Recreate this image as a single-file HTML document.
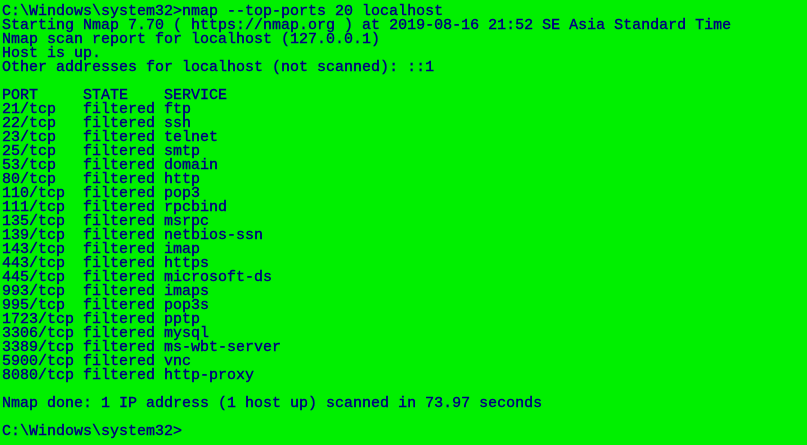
<!DOCTYPE html>
<html><head><meta charset="utf-8"><style>
html,body{margin:0;padding:0;background:#00f000;width:807px;height:445px;overflow:hidden}
pre{margin:0;position:absolute;left:2px;top:5px;font-family:"Liberation Mono",monospace;font-size:15px;line-height:14px;color:#000080;font-weight:normal;letter-spacing:0;-webkit-text-stroke:0.4px #000080}
</style></head><body><pre>C:\Windows\system32>nmap --top-ports 20 localhost
Starting Nmap 7.70 ( https://nmap.org ) at 2019-08-16 21:52 SE Asia Standard Time
Nmap scan report for localhost (127.0.0.1)
Host is up.
Other addresses for localhost (not scanned): ::1

PORT     STATE    SERVICE
21/tcp   filtered ftp
22/tcp   filtered ssh
23/tcp   filtered telnet
25/tcp   filtered smtp
53/tcp   filtered domain
80/tcp   filtered http
110/tcp  filtered pop3
111/tcp  filtered rpcbind
135/tcp  filtered msrpc
139/tcp  filtered netbios-ssn
143/tcp  filtered imap
443/tcp  filtered https
445/tcp  filtered microsoft-ds
993/tcp  filtered imaps
995/tcp  filtered pop3s
1723/tcp filtered pptp
3306/tcp filtered mysql
3389/tcp filtered ms-wbt-server
5900/tcp filtered vnc
8080/tcp filtered http-proxy

Nmap done: 1 IP address (1 host up) scanned in 73.97 seconds

C:\Windows\system32></pre></body></html>
